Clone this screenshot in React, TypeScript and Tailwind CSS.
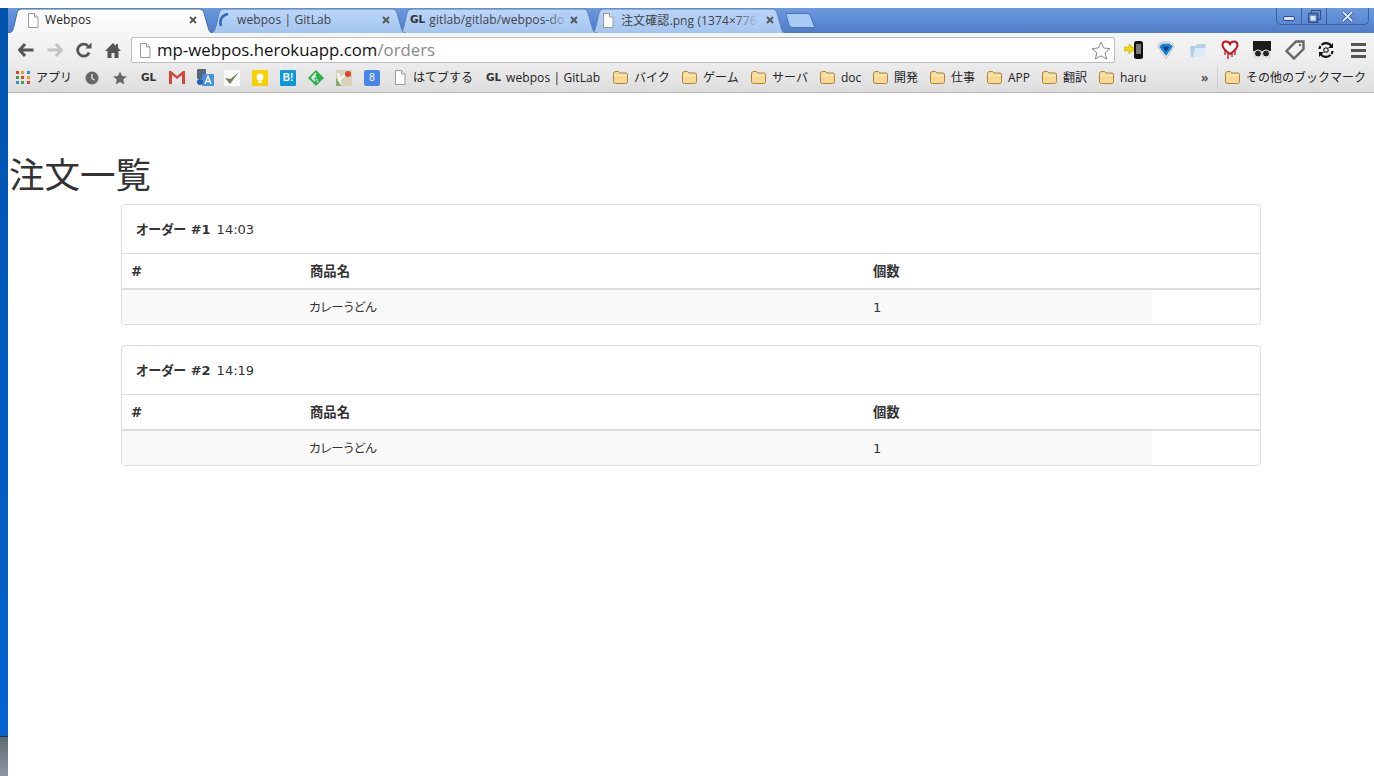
import type { ReactNode } from 'react';

const ui = 'font-["Open_Sans","Noto_Sans_CJK_JP",sans-serif]';
const jp = 'font-["DejaVu_Sans","Noto_Sans_CJK_JP",sans-serif]';

function PageIcon({ className = '' }: { className?: string }) {
  return (
    <svg width="12" height="15" viewBox="0 0 12 15" className={className}>
      <path d="M1.500.5h6l3.500 3.500v10.500h-9.500z" fill="#fff" stroke="#9a9a9a" />
      <path d="M7.500.5v3.500h3.500" fill="#eee" stroke="#9a9a9a" />
    </svg>
  );
}

function CloseX() {
  return (
    <svg width="8" height="8" viewBox="0 0 8 8" className="shrink-0">
      <path d="M1 1l6 6M7 1l-6 6" stroke="#555" strokeWidth="1.800" />
    </svg>
  );
}

function Folder() {
  return (
    <svg width="15" height="13" viewBox="0 0 15 13" className="shrink-0">
      <path d="M.5 2.500q0-2 2-2h3l1.500 1.500h6q1.500 0 1.500 1.500v7q0 2-2 2h-10q-2 0-2-2z" fill="#fbd891" stroke="#a8843f" />
      <path d="M1.500 4.500h12" stroke="#fff3d4" />
    </svg>
  );
}

function GL() {
  return <span className='shrink-0 font-["DejaVu_Sans",sans-serif] text-[10.500px] font-bold text-[#333]'>GL</span>;
}

function Tab({ width, active, children, className = '' }: { width: number; active?: boolean; children: ReactNode; className?: string }) {
  const w = width;
  const d = `M0.5 25 C4 25 5 22 6 18 L9 5 C10 2 11 1 14 1 L${w - 14} 1 C${w - 11} 1 ${w - 10} 2 ${w - 9} 5 L${w - 5} 19 C${w - 4} 23 ${w - 3} 25 ${w} 25`;
  return (
    <div className={`relative h-[25px] shrink-0 ${className}`} style={{ width }}>
      <svg width={w} height="25" className="absolute inset-0">
        <defs>
          <linearGradient id="tabActive" x1="0" y1="0" x2="0" y2="1">
            <stop offset="0" stopColor="#ffffff" />
            <stop offset="1" stopColor="#f6f6f6" />
          </linearGradient>
          <linearGradient id="tabIdle" x1="0" y1="0" x2="0" y2="1">
            <stop offset="0" stopColor="#bcd6f8" />
            <stop offset="1" stopColor="#a3c5f0" />
          </linearGradient>
        </defs>
        <path d={d} fill={active ? 'url(#tabActive)' : 'url(#tabIdle)'} stroke={active ? '#3f6db5' : '#5a7fb8'} />
      </svg>
      <div className="relative flex h-full items-center pb-px">{children}</div>
    </div>
  );
}

function TabTitle({ children, fade, color = 'text-[#444]', width }: { children: ReactNode; fade?: boolean; color?: string; width: string }) {
  return (
    <div className={`relative whitespace-nowrap text-[12px] leading-[16px] tracking-[0.1px] ${color} ${width}`}>
      {children}
      {fade && <div className="absolute inset-y-0 right-0 w-6 bg-gradient-to-r from-transparent to-[#aecdf4]" />}
    </div>
  );
}

function TabStrip() {
  return (
    <div className={`relative flex h-[25px] bg-gradient-to-b from-[#6c9ae0] to-[#4f7cc8] ${ui}`}>
      <Tab width={205} active className="z-10">
        <PageIcon className="ml-[19px]" />
        <TabTitle width="ml-[6px] w-[144px]" color="text-[#222]">Webpos</TabTitle>
        <CloseX />
      </Tab>
      <Tab width={196} className="z-[3] -ml-[3px]">
        <svg width="16" height="16" viewBox="0 0 16 16" className="ml-[6px] shrink-0">
          <path d="M12 2C6 3 3 8 5 14" fill="none" stroke="#2f6cc0" strokeWidth="2.600" />
        </svg>
        <TabTitle width="ml-[5px] w-[145px]">webpos | GitLab</TabTitle>
        <CloseX />
      </Tab>
      <Tab width={199} className="z-[2] -ml-[8px]">
        <span className="ml-[12px] flex"><GL /></span>
        <TabTitle width="ml-[4px] w-[141px]" fade>gitlab/gitlab/webpos-do</TabTitle>
        <CloseX />
      </Tab>
      <Tab width={196} className="z-[1] -ml-[7px]">
        <PageIcon className="ml-[12px]" />
        <TabTitle width="ml-[7px] w-[138px]" fade>
          <span className='font-["Noto_Sans_CJK_JP",sans-serif]'>注文確認</span>.png (1374×776
        </TabTitle>
        <span className="ml-[7px] flex"><CloseX /></span>
      </Tab>
      <svg width="32" height="15" viewBox="0 0 32 15" className="mt-[5px] -ml-[1px] shrink-0">
        <path d="M1 1.500C0 .5 1 .5 3 .5h19c2 0 3 1 4 4l3 8c.5 1.500 1 2 1.500 2H8c-2 0-3-1-4-3z" fill="#a9caf4" stroke="#4a74b4" />
      </svg>
      <div className="ml-auto mr-[5px] flex h-[17px] rounded-b-[5px] border border-t-0 border-[#3d5f9c] text-white">
        <div className="flex w-[25px] items-center justify-center border-r border-[#3d5f9c]">
          <div className="mt-1 h-[5px] w-[12px] rounded-[2px] border border-[#35507f] bg-[#d8e4f5]" />
        </div>
        <div className="flex w-[25px] items-center justify-center border-r border-[#3d5f9c]">
          <svg width="13" height="13" viewBox="0 0 13 13">
            <path d="M3.500 3.500v-3h9v9h-3" fill="none" stroke="#35507f" strokeWidth="1.200" />
            <path d="M.5 3.500h9v9h-9z" fill="none" stroke="#35507f" strokeWidth="1.500" />
            <path d="M2.500 6h5v4.500h-5z" fill="#dbe6f6" />
          </svg>
        </div>
        <div className="flex w-[41px] items-center justify-center">
          <svg width="13" height="11" viewBox="0 0 13 11">
            <path d="M2 1l9 9M11 1l-9 9" stroke="#35507f" strokeWidth="3.200" />
            <path d="M2 1l9 9M11 1l-9 9" stroke="#dbe6f6" strokeWidth="1.800" />
          </svg>
        </div>
      </div>
    </div>
  );
}

function NavIcons() {
  return (
    <div className="flex items-center">
      <svg width="16" height="14" viewBox="0 0 16 14" className="ml-[10px]">
        <path d="M7 1L1.500 7 7 13M2 7h13.500" fill="none" stroke="#555" strokeWidth="3" />
      </svg>
      <svg width="16" height="14" viewBox="0 0 16 14" className="ml-[13px]">
        <path d="M9 1l5.500 6L9 13M14 7H.5" fill="none" stroke="#c4c4c4" strokeWidth="3" />
      </svg>
      <svg width="16" height="16" viewBox="0 0 16 16" className="ml-[13px]">
        <path d="M13.200 10.500A6 6 0 1 1 12 4" fill="none" stroke="#555" strokeWidth="2.800" />
        <path d="M9.500 6.500h6V.5z" fill="#555" />
      </svg>
      <svg width="16" height="15" viewBox="0 0 16 15" className="ml-[13px]">
        <path d="M8 0L0 8h2.500v7h4v-5h3v5h4V8H16l-3-3V1h-2v2z" fill="#555" />
      </svg>
    </div>
  );
}

function ExtensionIcons() {
  return (
    <div className="ml-[9px] flex items-center">
      <svg width="20" height="20" viewBox="0 0 20 20">
        <path d="M0 7h5V4l6 5-6 5v-3H0z" fill="#f2d80e" stroke="#b9a200" strokeWidth=".5" />
        <rect x="10" y="1" width="9" height="18" rx="2.500" fill="#111" />
        <rect x="12" y="4" width="5" height="10" fill="#777" />
      </svg>
      <svg width="18" height="18" viewBox="0 0 18 18" className="ml-[13px]">
        <path d="M.5 5L5 1h8l4.500 4L9 17.500z" fill="#fff" stroke="#bbb" />
        <path d="M2 5.500L5.500 2.500h7L16 5.500 9 15z" fill="#1c86dc" />
        <path d="M5.500 5.500h7L9 11z" fill="#0b3f7c" />
      </svg>
      <svg width="18" height="17" viewBox="0 0 18 17" className="ml-[14px]">
        <path d="M1 4h6l1-2h9l-3 13H2z" fill="#b5d0e8" />
        <path d="M4 15L6 6h11l-3 9z" fill="#dbeaf8" />
      </svg>
      <svg width="18" height="20" viewBox="0 0 18 20" className="ml-[14px]">
        <path d="M9 14C4 10.500 1.500 8 1.500 5c0-4.500 6-4.500 7.500-1 1.500-3.500 7.500-3.500 7.500 1 0 3-2.500 5.500-7.500 9z" fill="#fff" stroke="#c5121e" strokeWidth="2" />
        <path d="M4 10v5M7 13v6M11 13v4M14 10v5" stroke="#c5121e" strokeWidth="1.300" />
      </svg>
      <svg width="18" height="18" viewBox="0 0 18 18" className="ml-[14px]">
        <rect width="18" height="18" fill="#1b1b1b" />
        <rect y="10" width="18" height="8" fill="#e4e4e4" />
        <circle cx="5" cy="12.500" r="3.500" fill="#222" stroke="#eee" />
        <circle cx="13" cy="12.500" r="3.500" fill="#222" stroke="#eee" />
      </svg>
      <svg width="20" height="20" viewBox="0 0 20 20" className="ml-[14px]">
        <path d="M11 1.500h7.500V9L9 18.500 1.500 11z" fill="none" stroke="#666" strokeWidth="2.400" />
        <circle cx="15" cy="5" r="1.200" fill="#666" />
      </svg>
      <svg width="16" height="16" viewBox="0 0 16 16" className="ml-[13px]">
        <path d="M13.500 4A6.500 6.500 0 0 0 3.500 3M2.500 12a6.500 6.500 0 0 0 10 1" fill="none" stroke="#111" strokeWidth="2.200" />
        <path d="M1.500 7a6.500 6.500 0 0 1 1-3M14.500 9a6.500 6.500 0 0 1-1 3" fill="none" stroke="#111" strokeWidth="2.200" />
        <circle cx="8" cy="8" r="2.200" fill="none" stroke="#333" strokeWidth="1.300" />
        <path d="M15 1v5h-5zM1 15v-5h5z" fill="#111" />
      </svg>
      <div className="ml-[17px] flex w-[15px] flex-col gap-[3px]">
        <div className="h-[3px] bg-[#555]" />
        <div className="h-[3px] bg-[#555]" />
        <div className="h-[3px] bg-[#555]" />
      </div>
    </div>
  );
}

function Toolbar() {
  return (
    <div className="flex h-[30px] items-center bg-gradient-to-b from-[#f6f6f6] to-[#ececec] pt-[4px]">
      <NavIcons />
      <div className={`ml-[10px] flex h-[26px] w-[984px] items-center rounded-[2px] border border-[#bdbdbd] bg-white pl-[7px] pr-[3px] ${ui}`}>
        <PageIcon />
        <div className="ml-[6px] whitespace-nowrap text-[16.800px] leading-none text-[#111]">
          mp-webpos.herokuapp.com<span className="text-[#8a8a8a]">/orders</span>
        </div>
        <svg width="20" height="19" viewBox="0 0 20 19" className="ml-auto">
          <path d="M10 1l2.700 6 6.300.6-4.800 4.200 1.400 6.200L10 14.800 4.400 18l1.400-6.200L1 7.600 7.300 7z" fill="#fff" stroke="#8a8a8a" />
        </svg>
      </div>
      <ExtensionIcons />
    </div>
  );
}

function Bookmark({ label, width, gap = 'ml-[12px]' }: { label: string; width: string; gap?: string }) {
  return (
    <div className={`flex shrink-0 items-center ${gap}`}>
      <Folder />
      <span className={`ml-[6px] whitespace-nowrap text-[12px] leading-none text-[#222] ${width}`}>{label}</span>
    </div>
  );
}

function AppsGrid() {
  const colors = ['#d9432f', '#e8a52c', '#3a8fd8', '#3fa34d', '#d9432f', '#e8a52c', '#3a8fd8', '#3fa34d', '#d9432f'];
  return (
    <div className="grid w-[14px] shrink-0 grid-cols-3 gap-[2px]">
      {colors.map((c, i) => (
        <div key={i} className="h-[3px] w-[3px]" style={{ backgroundColor: c }} />
      ))}
    </div>
  );
}

function BookmarkBar() {
  return (
    <div className={`flex h-[30px] items-center border-b border-[#b4b4b4] bg-gradient-to-b from-[#ececec] to-[#dedede] pl-[8px] ${ui}`}>
      <AppsGrid />
      <span className="ml-[6px] w-[36px] whitespace-nowrap text-[12px] leading-none text-[#222]">アプリ</span>
      <svg width="14" height="14" viewBox="0 0 14 14" className="ml-[13px] shrink-0">
        <circle cx="7" cy="7" r="6.500" fill="#666" />
        <path d="M7 3v4.500l2.500 1.500" fill="none" stroke="#eee" strokeWidth="1.300" />
      </svg>
      <svg width="14" height="14" viewBox="0 0 14 14" className="ml-[14px] shrink-0">
        <path d="M7 .5l2 4.500 4.800.4-3.600 3.200 1.100 4.900L7 11l-4.300 2.500 1.100-4.900L.2 5.400 5 5z" fill="#666" />
      </svg>
      <span className="ml-[14px] flex w-[14px]"><GL /></span>
      <svg width="16" height="13" viewBox="0 0 16 13" className="ml-[14px] shrink-0">
        <path d="M3 4v9h10V4L8 8z" fill="#e8e8e8" />
        <path d="M0 0h2l6 5 6-5h2v13h-3V4L8 8 3 4v9H0z" fill="#d5463a" />
      </svg>
      <svg width="18" height="17" viewBox="0 0 18 17" className="ml-[11px] shrink-0">
        <rect x="1" y="0" width="9" height="10" rx="1" fill="#567" />
        <rect x="6" y="5" width="12" height="12" rx="1" fill="#4a90d9" />
        <path d="M9 15l3-8 3 8M10 12.500h4" fill="none" stroke="#fff" strokeWidth="1.300" />
        <circle cx="4" cy="13" r="3" fill="#1c62b8" />
      </svg>
      <svg width="16" height="16" viewBox="0 0 16 16" className="ml-[10px] shrink-0">
        <rect width="16" height="16" fill="#fafafa" />
        <path d="M1 8l5 6L15 2 6.500 9z" fill="#6e7f62" />
      </svg>
      <svg width="16" height="16" viewBox="0 0 16 16" className="ml-[12px] shrink-0">
        <rect width="16" height="16" rx="1" fill="#f7d000" />
        <circle cx="8" cy="7" r="3.500" fill="#fff" />
        <rect x="6.200" y="10.500" width="3.600" height="2.500" fill="#fff" />
      </svg>
      <div className="ml-[12px] flex h-[16px] w-[16px] shrink-0 items-center justify-center rounded-[1px] bg-[#0d99d9] font-['Liberation_Sans',sans-serif] text-[10px] font-bold leading-none text-white">
        B!
      </div>
      <svg width="16" height="16" viewBox="0 0 16 16" className="ml-[12px] shrink-0">
        <path d="M8 0l8 8-8 8-8-8z" fill="#2bb24c" />
        <path d="M8 3L4 8l3 3M8 6L6 8M9 9l-1 1M10 11l-1 1" fill="none" stroke="#fff" strokeWidth="1.500" />
      </svg>
      <svg width="16" height="16" viewBox="0 0 16 16" className="ml-[12px] shrink-0">
        <rect width="16" height="16" fill="#d8d3b8" />
        <path d="M0 12L12 3M5 16L2 3" stroke="#fff" strokeWidth="2" />
        <path d="M0 8l6 8H0z" fill="#7fb06b" />
        <circle cx="12" cy="4" r="3" fill="#d9432f" />
      </svg>
      <div className="ml-[12px] flex h-[16px] w-[16px] shrink-0 items-center justify-center rounded-[2px] bg-[#4a86e8] font-['Liberation_Sans',sans-serif] text-[10px] leading-none text-white">
        8
      </div>
      <PageIcon className="ml-[14px] shrink-0" />
      <span className="ml-[7px] w-[60px] whitespace-nowrap text-[12px] leading-none text-[#222]">はてブする</span>
      <span className="ml-[13px] flex w-[14px]"><GL /></span>
      <span className="ml-[6px] w-[95px] whitespace-nowrap text-[12px] leading-none tracking-[0.1px] text-[#222]">webpos | GitLab</span>
      <Bookmark label="バイク" width="w-[36px]" />
      <Bookmark label="ゲーム" width="w-[36px]" />
      <Bookmark label="サーバ" width="w-[36px]" />
      <Bookmark label="doc" width="w-[20px]" />
      <Bookmark label="開発" width="w-[24px]" />
      <Bookmark label="仕事" width="w-[24px]" />
      <Bookmark label="APP" width="w-[22px]" />
      <Bookmark label="翻訳" width="w-[24px]" />
      <Bookmark label="haru" width="w-[26px]" />
      <span className="ml-[55px] w-[8px] text-[12px] font-bold leading-none text-[#555]">»</span>
      <div className="ml-[8px] h-[22px] w-px bg-[#cfcfcf]" />
      <Bookmark label="その他のブックマーク" width="w-[120px]" gap="ml-[7px]" />
    </div>
  );
}

function OrderPanel({ no, time, className = '' }: { no: number; time: string; className?: string }) {
  return (
    <div className={`w-[1140px] overflow-hidden rounded-[4px] border border-[#ddd] bg-white text-[#333] ${jp} ${className}`}>
      <div className="flex h-[49px] items-center border-b border-[#ddd] pl-[14px] text-[13px] leading-none">
        <span className="font-bold [font-feature-settings:'palt']">オーダー #{no}</span>
        <span className="ml-[6px] text-[13px]">{time}</span>
      </div>
      <div className="grid h-[36px] grid-cols-[179px_564px_287px] items-center border-b-2 border-[#ddd] pt-px text-[13.330px] font-bold leading-none">
        <div className="pl-[9px]">#</div>
        <div className="pl-[9px]">商品名</div>
        <div className="pl-[8px]">個数</div>
      </div>
      <div className="grid h-[34px] w-[1030px] grid-cols-[179px_564px_287px] items-center bg-[#f9f9f9] text-[12.500px] leading-none">
        <div />
        <div className="pl-[8px] pt-[3px] tracking-[-0.15px] [font-feature-settings:'palt']">カレーうどん</div>
        <div className="pl-[8px] text-[13px]">1</div>
      </div>
    </div>
  );
}

export default function App() {
  return (
    <div className="flex h-[776px] w-[1374px] flex-col overflow-hidden bg-white pt-2">
      <div className="flex min-h-0 flex-1">
        <div className="flex w-2 shrink-0 flex-col">
          <div className="flex-1 bg-gradient-to-b from-[#0054ad] to-[#0461cf]" />
          <div className="h-[40px] border-t border-[#333] bg-gradient-to-b from-[#5f6b74] to-[#8c969e]" />
        </div>
        <div className="min-w-0 flex-1">
          <TabStrip />
          <Toolbar />
          <BookmarkBar />
          <h1 className='mt-[55px] h-[56px] pl-[1px] font-["Noto_Sans_CJK_JP",sans-serif] text-[35.500px] leading-[50px] text-[#333]'>注文一覧</h1>
          <div className="ml-[113px]">
            <OrderPanel no={1} time="14:03" />
            <OrderPanel no={2} time="14:19" className="mt-[20px]" />
          </div>
        </div>
      </div>
    </div>
  );
}
